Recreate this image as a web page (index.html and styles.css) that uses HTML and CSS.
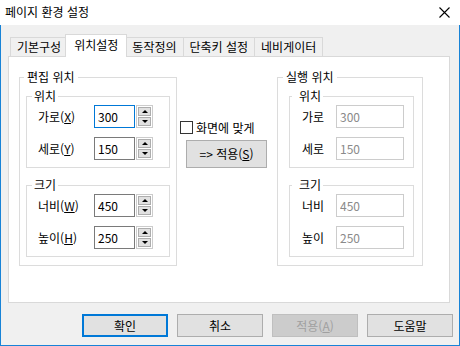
FILE: index.html
```html
<!DOCTYPE html>
<html lang="ko">
<head>
  <meta charset="UTF-8">
  <title>페이지 환경 설정</title>
  <link rel="stylesheet" href="styles.css">
</head>
<body>
  <div class="window">
    <div class="titlebar">
      <span class="title">페이지 환경 설정</span>
      <svg class="close" width="11" height="11" viewBox="0 0 11 11"><path d="M0.5 0.5 L10.5 10.5 M10.5 0.5 L0.5 10.5" stroke="#000" stroke-width="1.1" fill="none"/></svg>
    </div>
    <div class="frame">
      <div class="tabs">
        <div class="tab">기본구성</div>
        <div class="tab active">위치설정</div>
        <div class="tab">동작정의</div>
        <div class="tab">단축키 설정</div>
        <div class="tab">네비게이터</div>
      </div>
      <div class="panel">
        <!-- 편집 위치 -->
        <fieldset class="group edit">
          <legend>편집 위치</legend>
          <fieldset class="sub">
            <legend>위치</legend>
            <div class="row"><label>가로(<u>X</u>)</label><input class="num focus" value="300"><span class="spin"><i class="up"></i><i class="down"></i></span></div>
            <div class="row"><label>세로(<u>Y</u>)</label><input class="num" value="150"><span class="spin"><i class="up"></i><i class="down"></i></span></div>
          </fieldset>
          <fieldset class="sub">
            <legend>크기</legend>
            <div class="row"><label>너비(<u>W</u>)</label><input class="num" value="450"><span class="spin"><i class="up"></i><i class="down"></i></span></div>
            <div class="row"><label>높이(<u>H</u>)</label><input class="num" value="250"><span class="spin"><i class="up"></i><i class="down"></i></span></div>
          </fieldset>
        </fieldset>

        <div class="middle">
          <label class="check"><span class="box"></span>화면에 맞게</label>
          <button class="btn apply-to">=&gt; 적용(<u>S</u>)</button>
        </div>

        <!-- 실행 위치 -->
        <fieldset class="group run">
          <legend>실행 위치</legend>
          <fieldset class="sub">
            <legend>위치</legend>
            <div class="row"><label>가로</label><input class="num off" value="300" disabled></div>
            <div class="row"><label>세로</label><input class="num off" value="150" disabled></div>
          </fieldset>
          <fieldset class="sub">
            <legend>크기</legend>
            <div class="row"><label>너비</label><input class="num off" value="450" disabled></div>
            <div class="row"><label>높이</label><input class="num off" value="250" disabled></div>
          </fieldset>
        </fieldset>
      </div>
      <div class="buttons">
        <button class="btn default">확인</button>
        <button class="btn">취소</button>
        <button class="btn disabled">적용(<u>A</u>)</button>
        <button class="btn">도움말</button>
      </div>
    </div>
  </div>
</body>
</html>
```

FILE: styles.css
```css
body { margin: 0; font-family: "Noto Sans CJK KR", "Noto Sans", sans-serif; font-size: 12px; line-height: 16px; color: #000; background: #fff; }
.window { width: 460px; height: 346px; }
.titlebar { height: 25px; background: #fff; display: flex; align-items: center; justify-content: space-between; padding: 0 10px 1px 5px; box-sizing: border-box; }
.close { display: block; margin-right: 0; }
.frame { height: 321px; box-sizing: border-box; background: #f0f0f0; border: 1px solid #1883d7; border-top: none; padding: 9px 0 0 7px; }

/* tabs */
.tabs { display: flex; align-items: flex-end; height: 22px; padding-left: 2px; position: relative; z-index: 1; }
.tab { height: 19px; box-sizing: border-box; padding: 0 6px; border: 1px solid #d9d9d9; border-bottom: none; margin-right: -1px; line-height: 17px; background: #f0f0f0; white-space: nowrap; }
.tab.active { height: 23px; margin: 0 -1px -1px -2px; padding: 0 8px; background: #fff; line-height: 19px; position: relative; z-index: 2; }
.tab.active + .tab { margin-left: -1px; }

.panel { width: 442px; height: 247px; box-sizing: border-box; background: #fff; border: 1px solid #d9d9d9; display: flex; align-items: flex-start; padding: 12px 0 0 10px; }

/* groups */
fieldset { margin: 0; min-width: 0; border: 1px solid #dcdcdc; box-sizing: border-box; }
legend { padding: 0 3px; line-height: 16px; }
.group { padding: 3px 6px 8px 6px; }
.group > legend { margin-left: -2px; }
.edit { width: 158px; }
.run { width: 146px; padding: 3px 8px 8px 11px; }
.run > legend { margin-left: -6px; }
.sub { padding: 1px 17px 7px 11px; }
.sub + .sub { margin-top: 9px; }
.sub > legend { margin-left: -6px; padding: 0 2px; }
.run .sub { padding: 1px 9px 7px 12px; }
.run .sub > legend { margin-left: -10px; padding: 0 2px 0 7px; }

.row { display: flex; align-items: center; height: 23px; }
.row + .row { margin-top: 9px; }
.row label { width: 56px; flex: none; }
.run .row label { width: 34px; }
.num { width: 41px; height: 23px; box-sizing: border-box; border: 1px solid #7a7a7a; padding: 0 0 0 3px; margin: 0; font: inherit; font-size: 12px; color: #000; background: #fff; outline: none; }
.num.focus { border-color: #0078d7; }
.num.off { width: 68px; border-color: #cccccc; color: #8a8a8a; background: #fff; }

/* spin buttons */
.spin { width: 17px; height: 23px; box-sizing: border-box; border: 1px solid #cccccc; padding: 1px; display: flex; flex-direction: column; gap: 1px; margin-left: 1px; flex: none; }
.spin i { flex: 1; background: #e1e1e1; border: 1px solid #adadad; display: flex; align-items: center; justify-content: center; }
.spin i::after { content: ""; width: 0; height: 0; border-left: 3px solid transparent; border-right: 3px solid transparent; }
.spin .up::after { border-bottom: 3px solid #000; }
.spin .down::after { border-top: 3px solid #000; }

/* middle column */
.middle { width: 100px; flex: none; box-sizing: border-box; padding: 52px 0 0 3px; }
.check { display: flex; align-items: center; height: 13px; white-space: nowrap; }
.check .box { width: 13px; height: 13px; box-sizing: border-box; border: 1px solid #333; background: #fff; margin-right: 3px; flex: none; }
.btn { font: inherit; font-size: 12px; height: 23px; width: 86px; padding: 0; background: #e1e1e1; border: 1px solid #adadad; color: #000; }
.apply-to { width: 81px; height: 28px; margin: 6px 0 0 6px; display: block; }

.buttons { display: flex; justify-content: flex-end; gap: 9px; padding-right: 6px; margin-top: 11px; }
.btn.default { border: 2px solid #0078d7; }
.btn.disabled { background: #cccccc; border-color: #bfbfbf; color: #a0a0a0; }
u { text-underline-offset: 1px; }
```
